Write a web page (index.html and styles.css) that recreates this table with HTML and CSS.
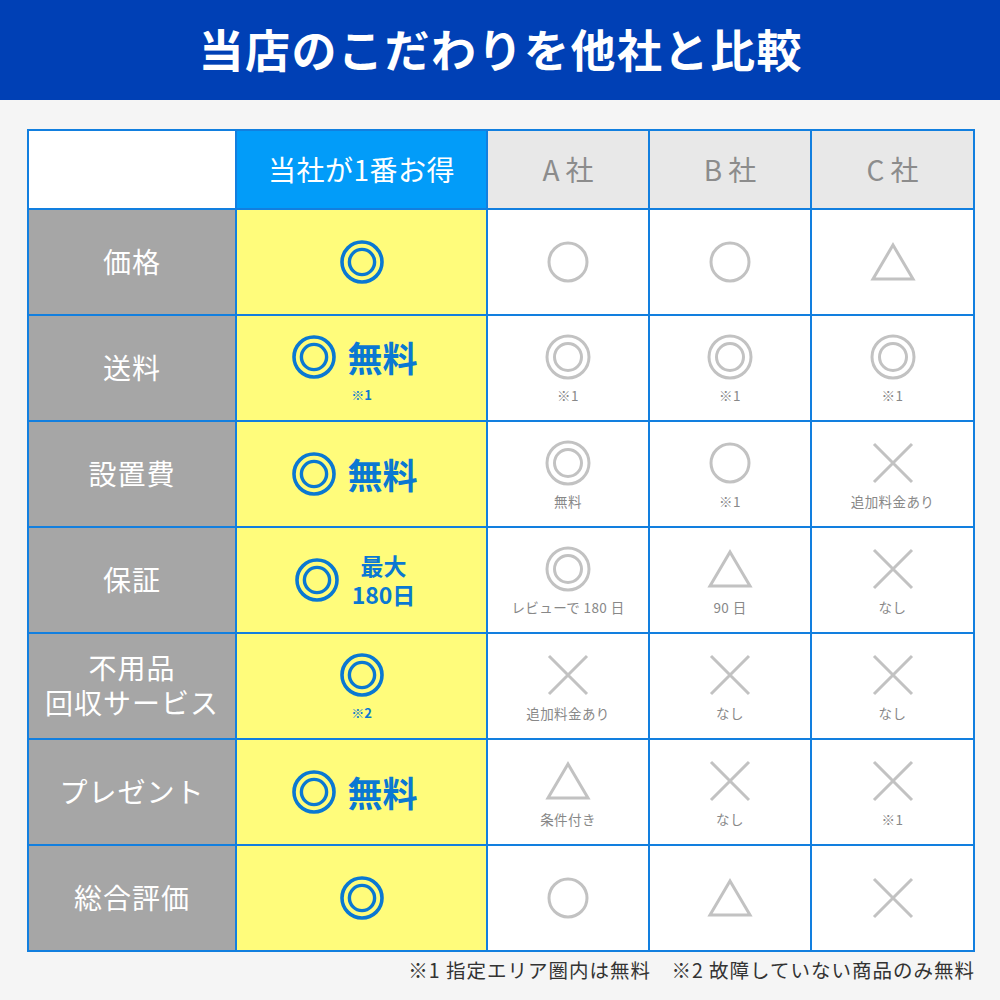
FILE: index.html
```html
<!DOCTYPE html>
<html lang="ja">
<head>
<meta charset="utf-8">
<link rel="stylesheet" href="styles.css">
</head>
<body>
<svg width="0" height="0" class="defs">
  <defs>
    <symbol id="dbl" viewBox="0 0 46 46"><circle cx="23" cy="23" r="20" fill="none" stroke="currentColor" stroke-width="3.6"/><circle cx="23" cy="23" r="12.6" fill="none" stroke="currentColor" stroke-width="3.4"/></symbol>
    <symbol id="gdbl" viewBox="0 0 46 46"><circle cx="23" cy="23" r="21" fill="none" stroke="currentColor" stroke-width="3"/><circle cx="23" cy="23" r="13.5" fill="none" stroke="currentColor" stroke-width="3"/></symbol>
    <symbol id="circ" viewBox="0 0 46 46"><circle cx="23" cy="23" r="19" fill="none" stroke="currentColor" stroke-width="3"/></symbol>
    <symbol id="tri" viewBox="0 0 46 46"><polygon points="23,6 43,40 3,40" fill="none" stroke="currentColor" stroke-width="3"/></symbol>
    <symbol id="cross" viewBox="0 0 46 46"><path d="M4 4 L42 42 M42 4 L4 42" fill="none" stroke="currentColor" stroke-width="3"/></symbol>
  </defs>
</svg>
<header class="title-bar"><h1 class="title">当店のこだわりを他社と比較</h1></header>
<main class="wrap">
  <div class="table">
    <div class="cell head-blank"></div>
    <div class="cell head-ours">当社が1番お得</div>
    <div class="cell head-other">A社</div>
    <div class="cell head-other">B社</div>
    <div class="cell head-other">C社</div>

    <div class="cell label">価格</div>
    <div class="cell ours"><svg class="sym"><use href="#dbl"/></svg></div>
    <div class="cell other"><svg class="gsym"><use href="#circ"/></svg></div>
    <div class="cell other"><svg class="gsym"><use href="#circ"/></svg></div>
    <div class="cell other"><svg class="gsym"><use href="#tri"/></svg></div>

    <div class="cell label">送料</div>
    <div class="cell ours"><div class="ours-row shift"><svg class="sym"><use href="#dbl"/></svg><span class="big">無料</span></div><span class="note-b">※1</span></div>
    <div class="cell other"><svg class="gsym"><use href="#gdbl"/></svg><span class="note">※1</span></div>
    <div class="cell other"><svg class="gsym"><use href="#gdbl"/></svg><span class="note">※1</span></div>
    <div class="cell other"><svg class="gsym"><use href="#gdbl"/></svg><span class="note">※1</span></div>

    <div class="cell label">設置費</div>
    <div class="cell ours"><div class="ours-row shift"><svg class="sym"><use href="#dbl"/></svg><span class="big">無料</span></div></div>
    <div class="cell other"><svg class="gsym"><use href="#gdbl"/></svg><span class="note">無料</span></div>
    <div class="cell other"><svg class="gsym"><use href="#circ"/></svg><span class="note">※1</span></div>
    <div class="cell other"><svg class="gsym"><use href="#cross"/></svg><span class="note">追加料金あり</span></div>

    <div class="cell label">保証</div>
    <div class="cell ours"><div class="ours-row shift"><svg class="sym"><use href="#dbl"/></svg><span class="mid"><span class="line">最大</span><span class="line">180日</span></span></div></div>
    <div class="cell other"><svg class="gsym"><use href="#gdbl"/></svg><span class="note">レビューで 180 日</span></div>
    <div class="cell other"><svg class="gsym"><use href="#tri"/></svg><span class="note">90 日</span></div>
    <div class="cell other"><svg class="gsym"><use href="#cross"/></svg><span class="note">なし</span></div>

    <div class="cell label"><span class="line">不用品</span><span class="line">回収サービス</span></div>
    <div class="cell ours"><svg class="sym"><use href="#dbl"/></svg><span class="note-b">※2</span></div>
    <div class="cell other"><svg class="gsym"><use href="#cross"/></svg><span class="note">追加料金あり</span></div>
    <div class="cell other"><svg class="gsym"><use href="#cross"/></svg><span class="note">なし</span></div>
    <div class="cell other"><svg class="gsym"><use href="#cross"/></svg><span class="note">なし</span></div>

    <div class="cell label">プレゼント</div>
    <div class="cell ours"><div class="ours-row shift"><svg class="sym"><use href="#dbl"/></svg><span class="big">無料</span></div></div>
    <div class="cell other"><svg class="gsym"><use href="#tri"/></svg><span class="note">条件付き</span></div>
    <div class="cell other"><svg class="gsym"><use href="#cross"/></svg><span class="note">なし</span></div>
    <div class="cell other"><svg class="gsym"><use href="#cross"/></svg><span class="note">※1</span></div>

    <div class="cell label">総合評価</div>
    <div class="cell ours"><svg class="sym"><use href="#dbl"/></svg></div>
    <div class="cell other"><svg class="gsym"><use href="#circ"/></svg></div>
    <div class="cell other"><svg class="gsym"><use href="#tri"/></svg></div>
    <div class="cell other"><svg class="gsym"><use href="#cross"/></svg></div>
  </div>
  <p class="footnote">※1 指定エリア圏内は無料　※2 故障していない商品のみ無料</p>
</main>
</body>
</html>
```

FILE: styles.css
```css
* { box-sizing: border-box; }
html, body { margin: 0; padding: 0; }
body {
  background: #f5f5f5;
  font-family: "Noto Sans CJK JP", "Noto Sans", sans-serif;
  width: 1000px;
  height: 1000px;
  overflow: hidden;
}
.defs { position: absolute; }
.title-bar {
  height: 100px;
  background: #0040b5;
  display: flex;
  align-items: center;
  justify-content: center;
}
.title {
  margin: 0;
  color: #fff;
  font-size: 45px;
  font-weight: 700;
  letter-spacing: 1.5px;
  padding-left: 1.5px;
  line-height: 1;
  padding-bottom: 4px;
}
.wrap {
  padding: 29px 25px 0 27px;
}
.table {
  width: 948px;
  display: grid;
  grid-template-columns: 206px 249px 160px 160px 161px;
  grid-template-rows: 77px repeat(7, 104px);
  gap: 2px;
  padding: 2px;
  background: #127fdf;
}
.cell {
  display: flex;
  flex-direction: column;
  align-items: center;
  justify-content: center;
  text-align: center;
}
.line { display: block; }
.head-blank { background: #fff; }
.head-ours {
  background: #029cf9;
  color: #fff;
  font-size: 28px;
  letter-spacing: 0.5px;
  padding-bottom: 2px;
}
.head-other {
  background: #e8e8e8;
  color: #8c8c8c;
  font-size: 28px;
  letter-spacing: 6px;
  padding-left: 6px;
  padding-bottom: 2px;
}
.label {
  background: #a6a6a6;
  color: #fff;
  font-size: 28px;
  letter-spacing: 1px;
  line-height: 35px;
  padding-bottom: 2px;
}
.ours {
  background: #fffc7b;
  color: #0a78d2;
}
.ours-row {
  display: flex;
  align-items: center;
  gap: 10px;
}
.shift { margin-right: 14px; }
.sym { width: 46px; height: 46px; color: #0a78d2; }
.big {
  font-size: 35px;
  font-weight: 700;
  line-height: 1;
  padding-bottom: 2px;
}
.mid {
  display: flex;
  flex-direction: column;
  align-items: center;
  font-size: 23px;
  font-weight: 700;
  line-height: 29px;
  padding-left: 2px;
}
.note-b {
  font-size: 13px;
  font-weight: 700;
  line-height: 14px;
  margin-top: 8px;
}
.other {
  background: #fff;
  color: #c2c2c2;
}
.gsym { width: 46px; height: 46px; color: #c2c2c2; }
.note {
  color: #888;
  font-size: 13.5px;
  line-height: 16px;
  margin-top: 7px;
  letter-spacing: 0.4px;
}
.footnote {
  margin: 5px 0 0;
  width: 948px;
  text-align: right;
  font-size: 19.5px;
  letter-spacing: 1px;
  color: #333;
  line-height: 26px;
}
```
